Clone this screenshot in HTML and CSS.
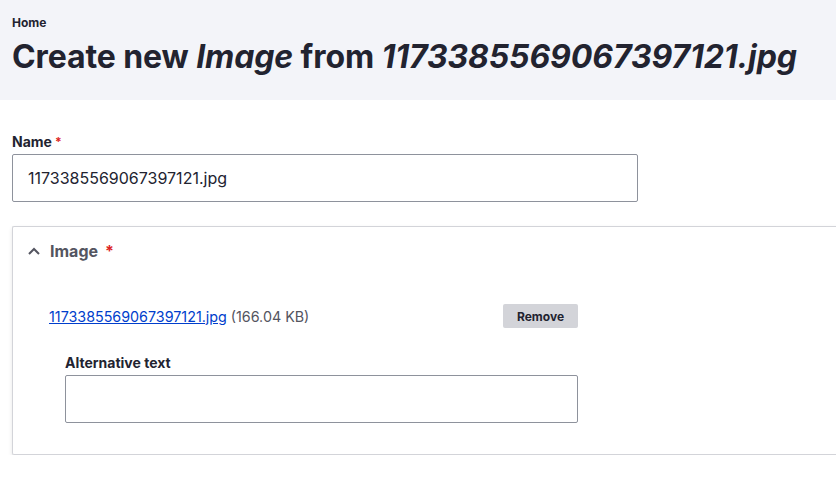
FILE: index.html
```html
<!DOCTYPE html>
<html>
<head>
<meta charset="utf-8">
<link rel="stylesheet" href="styles.css">
</head>
<body>
<header class="page-header">
  <nav class="breadcrumb"><a href="#">Home</a></nav>
  <h1 class="title">Create new <em>Image</em> from <em>1173385569067397121.jpg</em></h1>
</header>
<main class="content">
  <div class="form-item">
    <label class="label">Name<span class="req">*</span></label>
    <input class="text-input name-input" type="text" value="1173385569067397121.jpg">
  </div>
  <details class="panel" open>
    <summary class="panel-summary">
      <svg class="chev" width="12" height="8" viewBox="0 0 12 8"><path d="M1 7 L6 2 L11 7" fill="none" stroke="#545560" stroke-width="2"/></svg>
      <span class="summary-text">Image</span><span class="req req-lg">*</span>
    </summary>
    <div class="panel-body">
      <div class="file-row">
        <div class="file-info"><a class="file-link" href="#">1173385569067397121.jpg</a> <span class="file-size">(166.04 KB)</span></div>
        <button class="btn-remove" type="button">Remove</button>
      </div>
      <div class="alt-item">
        <label class="label">Alternative text</label>
        <input class="text-input alt-input" type="text">
      </div>
    </div>
  </details>
</main>
</body>
</html>
```
FILE: styles.css
```css
* { box-sizing: border-box; }
body {
  margin: 0;
  font-family: Inter, "Noto Sans", sans-serif;
  color: #222330;
  background: #fff;
  width: 836px;
  overflow: hidden;
}
.page-header {
  background: #f3f4f9;
  height: 100px;
  padding: 15px 12px 0;
}
.breadcrumb a {
  font-size: 12px;
  font-weight: 700;
  color: #222330;
  text-decoration: none;
  line-height: 16px;
  display: block;
}
.title {
  margin: 7px 0 0;
  font-size: 32px;
  line-height: 38px;
  font-weight: 700;
  letter-spacing: -0.1px;
  white-space: nowrap;
}
.title em { font-style: italic; }
.content {
  padding: 33px 0 0 12px;
}
.form-item { margin-bottom: 24px; }
.label {
  display: block;
  font-size: 14px;
  font-weight: 700;
  line-height: 18px;
  margin-bottom: 3px;
}
.req {
  color: #dc2323;
  margin-left: 3px;
  font-size: 12px;
  vertical-align: top;
}
.text-input {
  display: block;
  height: 48px;
  border: 1px solid #8e929c;
  border-radius: 2px;
  font-family: inherit;
  font-size: 16px;
  color: #222330;
  padding: 0 15px;
  background: #fff;
}
.name-input { width: 626px; }
.panel {
  border: 1px solid #d3d4d9;
  border-right: none;
  border-radius: 2px 0 0 2px;
  box-shadow: 0 2px 4px rgba(0,0,0,0.1);
  margin-right: -20px;
  height: 229px;
}
.panel-summary {
  list-style: none;
  display: flex;
  align-items: center;
  padding: 0 15px;
  height: 48px;
  cursor: pointer;
}
.panel-summary::-webkit-details-marker { display: none; }
.chev { margin-right: 10px; }
.summary-text {
  font-size: 16px;
  font-weight: 700;
  color: #545560;
}
.req-lg {
  font-size: 16px;
  font-weight: 700;
  margin-left: 7px;
  vertical-align: baseline;
}
.panel-body { padding: 29px 0 0 36px; }
.file-row {
  display: flex;
  align-items: center;
  justify-content: space-between;
  width: 529px;
  height: 24px;
}
.file-info { font-size: 14.3px; color: #545560; }
.file-link { color: #003ecc; text-decoration: underline; }
.btn-remove {
  background: #d3d4d9;
  border: none;
  border-radius: 2px;
  height: 24px;
  width: 75px;
  font-family: inherit;
  font-size: 12px;
  font-weight: 700;
  color: #222330;
  padding: 0;
}
.alt-item { padding: 26px 0 0 16px; }
.alt-input { width: 513px; }
```
